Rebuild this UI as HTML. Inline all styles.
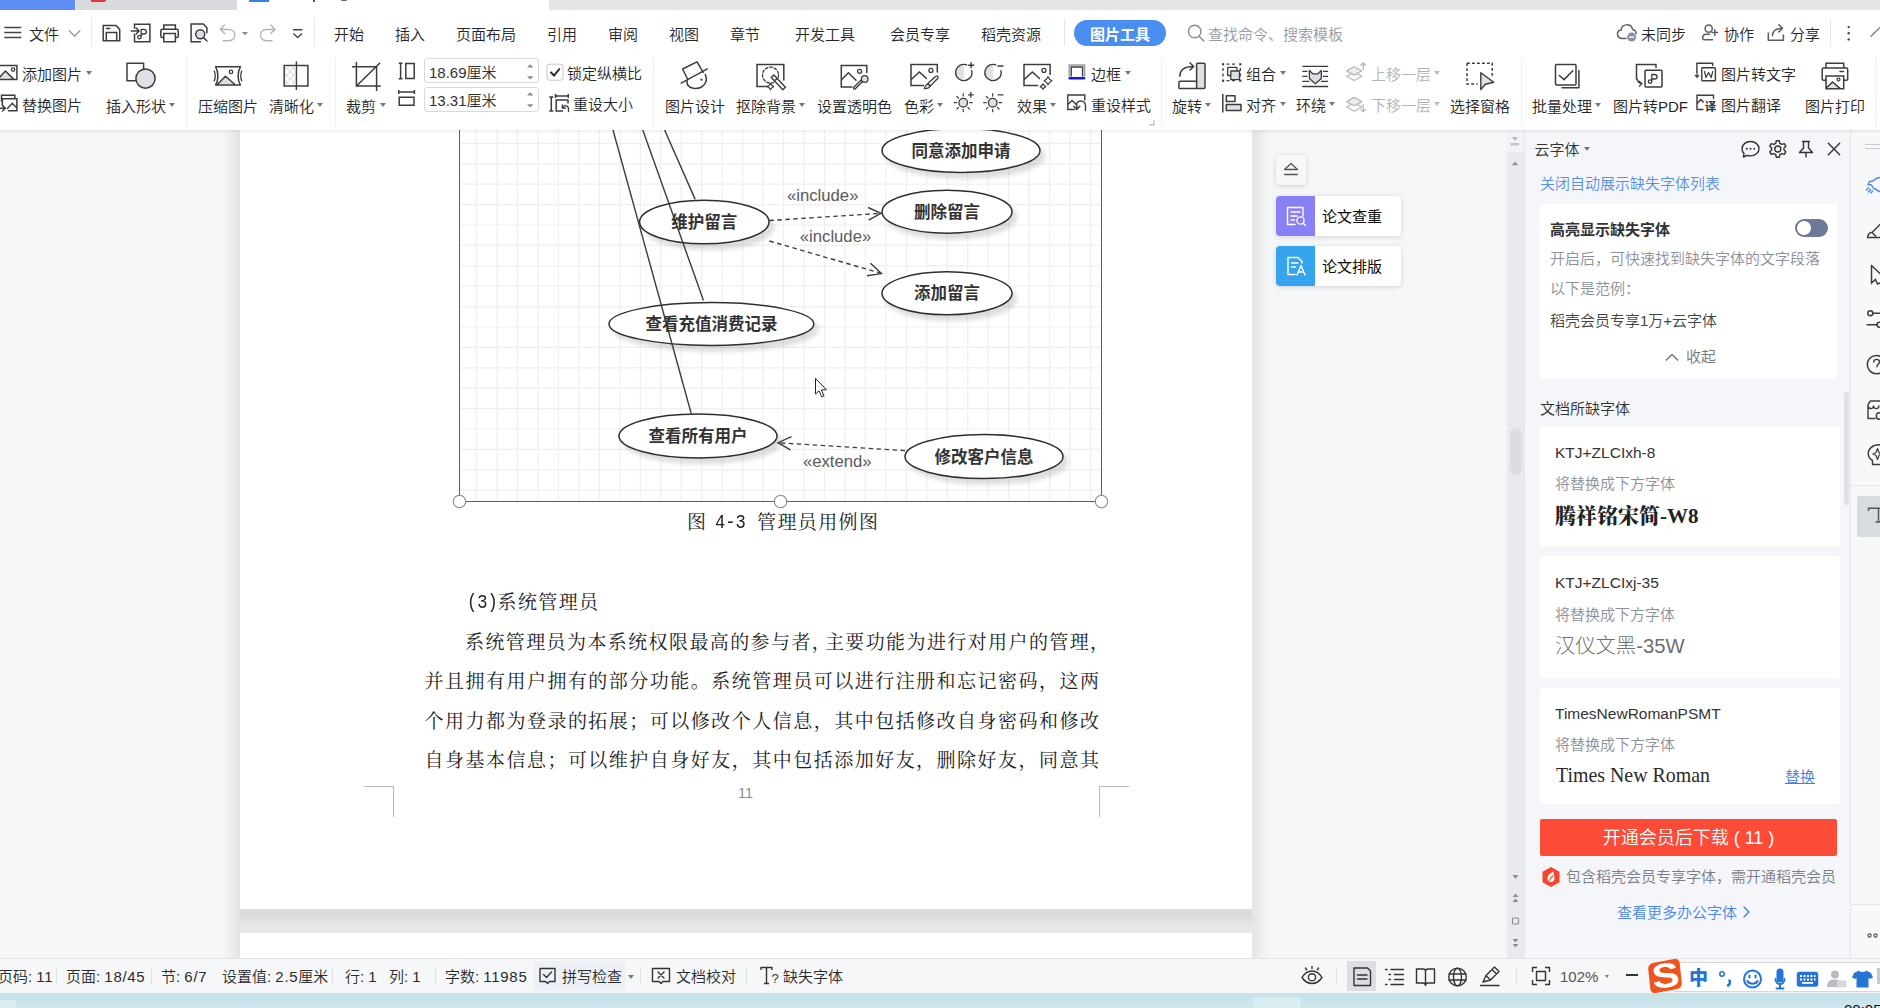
<!DOCTYPE html>
<html lang="zh-CN">
<head>
<meta charset="utf-8">
<title>WPS</title>
<style>
*{box-sizing:border-box;margin:0;padding:0}
html,body{width:1880px;height:1008px;overflow:hidden;background:#fff}
body{position:relative;font-family:"Liberation Sans","Noto Sans CJK SC",sans-serif;color:#222;font-size:15px}
.a{position:absolute}
.t{position:absolute;white-space:nowrap;font-size:15px;line-height:20px;height:20px;color:#262626;margin-top:2px;font-weight:350}
.g{color:#b4b4b4}
svg{position:absolute;overflow:visible}
.s{fill:none;stroke:#3a3a3a;stroke-width:1.5;stroke-linecap:round;stroke-linejoin:round}
.dd{position:absolute;width:0;height:0;border-left:3px solid transparent;border-right:3px solid transparent;border-top:4px solid #777}
.sep{position:absolute;width:1px;background:#e6e6e6}
.st{font-size:15px;color:#2b2b2b}
.n{letter-spacing:.7px}
/* document */
.mn{font-family:"Liberation Mono",monospace;font-size:20.5px !important;letter-spacing:0 !important;transform:scaleX(.835);transform-origin:0 50%}
.j{text-align:justify;text-align-last:justify;letter-spacing:0 !important;white-space:normal !important}
.doc{font-family:"Liberation Serif","Noto Serif CJK SC",serif;color:#1a1a1a}
.dl{position:absolute;white-space:nowrap;font-size:19px;line-height:24px;height:24px;letter-spacing:1.4px;color:#222}
</style>
</head>
<body>
<!-- ===== title strip ===== -->
<div class="a" id="titlestrip" style="left:0;top:0;width:1880px;height:10px;background:#e4e5e7"></div>
<div class="a" style="left:0;top:0;width:75px;height:10px;background:#5d8df5"></div>
<div class="a" style="left:76px;top:0;width:161px;height:10px;background:#d9dadd"></div>
<div class="a" style="left:237px;top:0;width:312px;height:10px;background:#fff"></div>
<div class="a" style="left:91px;top:0;width:15px;height:2px;background:#e8323c;border-radius:0 0 6px 2px"></div>
<div class="a" style="left:249px;top:0;width:20px;height:2px;background:#3c7df0"></div>
<div class="a" style="left:313px;top:0;width:2px;height:2px;background:#555"></div>
<div class="a" style="left:341px;top:0;width:6px;height:1px;background:#666;border-radius:0 0 3px 3px"></div>

<!-- ===== menu row ===== -->
<div class="a" id="menurow" style="left:0;top:10px;width:1880px;height:45px;background:#fff"></div>

<!-- ===== ribbon ===== -->
<div class="a" id="ribbon" style="left:0;top:55px;width:1880px;height:75px;background:#fff"></div>


<!-- menu texts -->
<div class="t" style="left:29px;top:23px">文件</div>
<div class="sep" style="left:91px;top:17px;height:30px;background:#e9e9e9"></div>
<div class="sep" style="left:314px;top:17px;height:30px;background:#e9e9e9"></div>
<div class="t" style="left:334px;top:23px">开始</div>
<div class="t" style="left:395px;top:23px">插入</div>
<div class="t" style="left:456px;top:23px">页面布局</div>
<div class="t" style="left:547px;top:23px">引用</div>
<div class="t" style="left:608px;top:23px">审阅</div>
<div class="t" style="left:669px;top:23px">视图</div>
<div class="t" style="left:730px;top:23px">章节</div>
<div class="t" style="left:795px;top:23px">开发工具</div>
<div class="t" style="left:890px;top:23px">会员专享</div>
<div class="t" style="left:981px;top:23px">稻壳资源</div>
<div class="sep" style="left:1064px;top:19px;height:27px"></div>
<div class="a" style="left:1074px;top:20px;width:92px;height:26px;border-radius:13px;background:#4a8ef2"></div>
<div class="t" style="left:1090px;top:23px;color:#fff;font-weight:700">图片工具</div>
<div class="t" style="left:1208px;top:23px;color:#989ba3">查找命令、搜索模板</div>
<div class="t" style="left:1641px;top:23px">未同步</div>
<div class="t" style="left:1724px;top:23px">协作</div>
<div class="t" style="left:1790px;top:23px">分享</div>
<div class="sep" style="left:1830px;top:19px;height:27px"></div>


<!-- menu icons -->
<svg style="left:0;top:10px" width="330" height="45" viewBox="0 10 330 45">
<g class="s" style="stroke:#444;stroke-width:1.4;stroke-linecap:butt"><path d="M4.300 27.500 H21.300 M4.300 32.500 H21.300 M4.300 37.500 H21.300"/></g>
<path class="s" style="stroke:#9a9a9a;stroke-width:1.300" d="M69.300 30.800 L74.600 36.200 L79.900 30.800"/>
<g class="s" style="stroke:#3c3c3c;stroke-width:1.500">
<path d="M103.200 25.400 H116.000 L119.700 29.400 V40.700 H103.200 Z M106.300 40.700 V32.600 H116.700 V40.700 M106.500 28.500 H109.800" stroke-linejoin="miter"/>
<path d="M134.500 28.200 V24.200 H149.900 V41.800 H134.500 V34.200 M131.300 31.000 H138.700 M136.200 28.000 L139.000 31.000 L136.200 34.000" stroke-linejoin="miter"/>
<path d="M141.200 37.000 C141.200 39.300 137.700 39.300 137.700 37.000 C137.700 34.900 141.200 34.900 141.200 37.000 V29.300 H143.800 C147.300 29.300 147.300 34.000 143.800 34.000 H141.200" stroke-width="1.300"/>
<path d="M163.800 29.200 V25.100 H175.400 V29.200 M163.800 37.400 H162.300 C161.300 37.400 160.800 36.800 160.800 35.900 V31.000 C160.800 30.000 161.400 29.300 162.400 29.300 H176.700 C177.700 29.300 178.300 30.000 178.300 31.000 V35.900 C178.300 36.800 177.800 37.400 176.800 37.400 H175.400 M163.800 33.600 H175.400 V41.800 H163.800 Z" stroke-linejoin="miter"/>
<path d="M200.500 41.800 H191.100 V24.000 H203.300 L206.900 27.700 V32.700" stroke-linejoin="miter"/>
<circle cx="200.200" cy="34.200" r="4.500" fill="#dcdde4"/><path d="M203.500 37.500 L207.000 41.000"/>
</g>
<g class="s" style="stroke:#b3b3b3;stroke-width:1.400">
<path d="M224.400 25.000 L220.300 29.500 L224.700 33.500 M220.600 29.500 H228.800 C236.800 29.500 236.800 40.700 228.800 40.700 H223.300"/>
<path d="M270.900 25.000 L275.000 29.500 L270.600 33.500 M274.700 29.500 H266.500 C258.500 29.500 258.500 40.700 266.500 40.700 H272.000"/>
</g>
<path d="M241.800 32.000 H248.200 L245.000 35.300 Z" fill="#8c8c9c"/>
<path class="s" style="stroke:#444;stroke-width:1.400;stroke-linecap:butt" d="M293.000 29.800 H302.400 M293.300 33.500 L297.700 37.600 L302.100 33.500"/>
</svg>

<svg style="left:1180px;top:10px" width="700" height="45" viewBox="1180 10 700 45">
<g class="s" style="stroke:#8d8d8d;stroke-width:1.400"><circle cx="1194.700" cy="31.500" r="6.200"/><path d="M1199.200 36.200 L1203.800 41.000"/></g>
<g class="s" style="stroke:#5b5f6b;stroke-width:1.500">
<path d="M1626.000 38.500 H1622.500 C1616.200 38.500 1616.000 30.500 1621.300 30.000 C1621.500 23.500 1631.500 23.000 1632.500 29.500 C1635.000 29.800 1636.300 31.500 1636.000 33.800"/>
<circle cx="1708.700" cy="28.600" r="3.600"/>
<path d="M1712.500 39.800 H1704.500 C1701.800 39.800 1701.800 34.800 1705.800 34.300 H1709.500 M1714.800 29.800 V35.400 M1712.000 32.600 H1717.600"/>
<path d="M1768.300 33.000 V40.200 H1783.400 V35.000 M1772.500 35.800 C1772.500 31.000 1776.000 28.300 1782.300 28.300 M1778.800 24.800 L1782.600 28.300 L1778.800 31.900"/>
</g>
<circle cx="1631.600" cy="37.100" r="4.500" fill="#8a8fa5"/><rect x="1629.100" y="36.400" width="5.000" height="1.400" fill="#fff"/>
<g fill="#444"><circle cx="1848.700" cy="27.100" r="1.200"/><circle cx="1848.700" cy="33.300" r="1.200"/><circle cx="1848.700" cy="39.400" r="1.200"/></g>
<path class="s" style="stroke:#777;stroke-width:1.300" d="M1871.000 36.300 L1880.000 27.400"/>
</svg>

<!-- ribbon icons -->
<svg id="ribicons" style="left:0;top:55px" width="1880" height="75" viewBox="0 55 1880 75">
<g id="rg1" class="s" style="stroke:#3c3c3c;stroke-width:1.500">
<!-- add picture -->
<path d="M-2.000 79.300 L5.400 71.000 L13.800 79.300 Z" fill="#dfe0e5" stroke="none"/>
<path d="M-2.000 65.400 H16.900 V79.600 H-2.000 M-1.500 78.500 L5.400 71.000 L13.900 79.400" stroke-linejoin="miter"/>
<circle cx="13.100" cy="69.600" r="1.700" stroke-width="1.300"/>
<!-- replace picture -->
<path d="M1.500 101.000 V95.300 H14.800 V98.300 M2.300 105.000 V98.700 H16.900 V110.800 H8.500 M-1.000 108.300 H5.000 M2.600 105.600 L5.300 108.300 L2.600 111.000 M7.500 108.500 L12.300 103.300 L16.900 108.000" stroke-linejoin="miter"/>
<!-- shapes -->
<path d="M137.000 80.800 H127.000 V63.200 H143.600 V69.500" stroke-linejoin="miter"/>
<circle cx="145.500" cy="78.600" r="9.600" fill="#dfe0e5"/>
<!-- compress -->
<path d="M217.000 84.800 L225.500 76.300 L235.500 84.800 Z" fill="#dfe0e5" stroke="none"/>
<path d="M215.600 66.800 H240.400 C237.300 72.000 237.300 80.000 240.400 85.000 H215.600 C218.700 80.000 218.700 72.000 215.600 66.800 Z M217.300 84.500 L225.500 76.300 L235.200 84.700"/>
<circle cx="231.000" cy="71.900" r="1.700" stroke-width="1.300"/>
<path d="M214.200 71.000 C215.500 74.000 215.500 78.000 214.200 81.000 M241.800 71.000 C240.500 74.000 240.500 78.000 241.800 81.000" stroke-width="1.300"/>
<!-- sharpen -->
<path d="M296.400 65.400 H284.200 V86.000 H296.400 M296.400 65.400 H307.900 V86.000 H296.400 M296.400 62.000 V89.600" stroke-linejoin="miter"/>
<!-- crop -->
<path d="M356.400 62.000 V86.000 H380.800 M352.000 66.800 H376.600 V90.900 M356.700 85.700 L380.200 62.700" stroke-linecap="butt" stroke-linejoin="miter"/>
<!-- height/width -->
<path d="M398.700 63.200 H402.500 M400.600 63.200 V78.800 M398.700 78.800 H402.500 M405.800 63.400 H414.200 V78.600 H405.800 Z M398.800 90.000 V94.000 M398.800 92.000 H414.400 M414.400 90.000 V94.000 M399.200 97.300 H414.000 V105.200 H399.200 Z" stroke-linecap="butt" stroke-linejoin="miter"/>
<!-- reset size -->
<path d="M549.300 97.000 H553.300 M551.300 97.000 V111.000 M549.300 111.000 H553.300 M555.500 94.000 V98.000 M555.500 96.000 H568.300 M568.300 94.000 V98.000 M563.000 111.000 H556.200 V100.000 H568.000 V103.500" stroke-linecap="butt" stroke-linejoin="miter"/>
<path d="M562.700 107.500 C564.500 104.500 568.500 105.500 568.500 109.000 V111.500 M562.300 105.000 V108.000 H565.300" stroke-width="1.300"/>
</g>
<g fill="#e3e4e8"><rect x="285" y="66.200" width="3.600" height="3.600"/><rect x="288.600" y="69.800" width="3.600" height="3.600"/><rect x="292.200" y="66.200" width="3.400" height="3.600"/><rect x="285.000" y="73.400" width="3.600" height="3.600"/><rect x="292.200" y="73.400" width="3.400" height="3.600"/><rect x="288.600" y="77.000" width="3.600" height="3.600"/><rect x="285.000" y="80.600" width="3.600" height="3.600"/><rect x="292.200" y="80.600" width="3.400" height="3.600"/></g>
<!-- spinners -->
<g fill="#8a8a8a"><path d="M527.000 67.600 L530.200 64.300 L533.400 67.600 Z M527.000 76.200 L530.200 79.500 L533.400 76.200 Z M527.000 95.600 L530.200 92.300 L533.400 95.600 Z M527.000 104.200 L530.200 107.500 L533.400 104.200 Z"/></g>
<!-- checkbox -->
<rect x="547.000" y="64.200" width="16.000" height="16.000" rx="2.500" fill="#fff" stroke="#c9c9c9" stroke-width="1.000"/>
<path d="M550.500 71.800 L554.000 75.500 L559.800 68.500" fill="none" stroke="#222" stroke-width="1.900" stroke-linecap="butt"/>
<g id="rg2" class="s" style="stroke:#3c3c3c;stroke-width:1.500">
<!-- design hat -->
<path d="M682.600 69.000 L697.000 61.900 L703.200 72.300 M682.600 69.000 L687.800 79.500 M681.200 83.100 L707.300 68.800 M687.000 80.500 C686.000 90.000 699.000 90.000 703.500 85.500 C706.500 82.500 707.000 78.500 705.300 74.500"/>
<circle cx="701.400" cy="79.700" r="1.100" fill="#3c3c3c" stroke="none"/>
<!-- remove bg -->
<path d="M768.000 86.400 H757.000 V64.600 H783.800 V80.000" stroke-linejoin="miter"/>
<circle cx="770.500" cy="75.100" r="8.000" stroke-dasharray="2.600 2.000" stroke-width="1.300"/>
<path d="M771.300 77.600 L773.900 75.100 L785.400 87.300 L782.800 89.800 Z M774.400 80.900 L777.000 78.400" fill="#fff" stroke-linejoin="miter" stroke-width="1.400"/>
<path d="M770.5 83.39999999999999 Q771.396 85.704 773.7 86.6 Q771.396 87.496 770.5 89.8 Q769.604 87.496 767.3 86.6 Q769.604 85.704 770.5 83.39999999999999 Z" fill="#fff" stroke-width="1.200"/>
<!-- transparent color -->
<path d="M852.000 87.000 H841.300 V65.500 H866.800 V72.500 M841.500 79.800 L848.400 72.800 L856.000 80.300" stroke-linejoin="miter"/>
<circle cx="859.600" cy="71.300" r="2.000" stroke-width="1.300"/>
<path d="M862.300 81.800 L855.300 88.800 C854.300 89.800 852.800 88.300 853.800 87.300 L860.800 80.300" stroke-width="1.300"/>
<circle cx="864.700" cy="79.000" r="3.300" fill="#dfe0e5" stroke-width="1.300"/>
<!-- color -->
<path d="M923.500 85.400 H911.000 V64.600 H937.300 V72.000 M911.200 79.500 L919.400 71.900 L926.500 78.500" stroke-linejoin="miter"/>
<circle cx="930.900" cy="70.400" r="2.000" stroke-width="1.300"/>
<path d="M935.800 76.300 C937.300 75.300 938.800 76.800 937.800 78.300 L930.300 86.000 L927.800 83.600 Z" stroke-width="1.300"/>
<path d="M927.800 83.800 L930.200 86.100 C929.000 88.500 926.500 88.800 924.200 88.600 C925.200 87.000 925.300 84.800 927.800 83.800 Z" fill="#dfe0e5" stroke-width="1.200"/>
<!-- contrast -->
<path d="M963.900 64.500 C953.200 64.500 953.200 80.500 963.900 80.500 Z" fill="#dfe0e5" stroke="none"/>
<path d="M966.500 64.700 C955.000 62.000 951.500 77.500 961.500 80.300 C968.000 82.000 973.000 76.500 971.800 70.800 M968.600 65.300 H973.600 M971.100 62.800 V67.800" stroke-width="1.400"/>
<path d="M993.100 64.500 C982.400 64.500 982.400 80.500 993.100 80.500 Z" fill="#dfe0e5" stroke="none"/>
<path d="M995.700 64.700 C984.200 62.000 980.700 77.500 990.700 80.300 C997.200 82.000 1002.200 76.500 1001.000 70.800 M998.000 66.000 H1003.000" stroke-width="1.400"/>
<!-- brightness -->
<circle cx="963.200" cy="102.700" r="4.300" fill="#dfe0e5" stroke-width="1.300"/>
<path d="M969.8 102.7 L972.2 102.7 M967.9 107.4 L969.6 109.1 M963.2 109.3 L963.2 111.7 M958.5 107.4 L956.8 109.1 M956.6 102.7 L954.2 102.7 M958.5 98.0 L956.8 96.3 M963.2 96.1 L963.2 93.7" stroke-width="1.200"/>
<path d="M968.400 94.800 H973.200 M970.800 92.400 V97.200" stroke-width="1.300"/>
<circle cx="992.700" cy="102.700" r="4.300" fill="#dfe0e5" stroke-width="1.300"/>
<path d="M999.3 102.7 L1001.7 102.7 M997.4 107.4 L999.1 109.1 M992.7 109.3 L992.7 111.7 M988.0 107.4 L986.3 109.1 M986.1 102.7 L983.7 102.7 M988.0 98.0 L986.3 96.3 M992.7 96.1 L992.7 93.7" stroke-width="1.200"/>
<path d="M998.000 94.800 H1003.000" stroke-width="1.300"/>
<!-- effects -->
<path d="M1037.500 85.400 H1024.000 V64.600 H1050.100 V74.500 M1024.200 79.500 L1032.400 71.900 L1039.500 78.500" stroke-linejoin="miter"/>
<circle cx="1043.900" cy="70.400" r="2.000" stroke-width="1.300"/>
<path d="M1048 76.7 Q1049.12 79.58 1052.0 80.7 Q1049.12 81.82000000000001 1048 84.7 Q1046.88 81.82000000000001 1044.0 80.7 Q1046.88 79.58 1048 76.7 Z" fill="#fff" stroke-width="1.200"/>
<path d="M1043 83.8 Q1043.784 85.81599999999999 1045.8 86.6 Q1043.784 87.384 1043 89.39999999999999 Q1042.216 87.384 1040.2 86.6 Q1042.216 85.81599999999999 1043 83.8 Z" fill="#fff" stroke-width="1.200"/>
<!-- border -->
<path d="M1069.200 76.000 V65.000 H1084.600 V76.000" stroke="#9a9ca6" stroke-width="1.400" stroke-linejoin="miter"/>
<path d="M1071.200 76.000 V67.000 H1082.600 V76.000" stroke-linejoin="miter" stroke-width="1.400"/>
<!-- reset style -->
<path d="M1074.500 109.500 H1067.800 V95.000 H1084.800 V100.000 M1068.000 104.500 L1072.000 100.500 L1076.000 104.300" stroke-linejoin="miter" stroke-width="1.400"/>
<path d="M1076.500 103.500 C1079.000 99.500 1085.500 100.500 1085.500 106.000 V110.500 M1073.800 106.200 L1076.800 109.500 L1079.800 106.200 M1076.800 103.500 V109.200" stroke-width="1.400"/>
</g>
<rect x="1068.500" y="77.100" width="16.800" height="2.400" rx="1.200" fill="#1717d8"/>
<path d="M1149.000 124.800 H1154.000 V120.200" fill="none" stroke="#c6c6c6" stroke-width="1.500"/>
<g id="rg3" class="s" style="stroke:#3c3c3c;stroke-width:1.500">
<!-- rotate -->
<rect x="1196.600" y="63.300" width="8.400" height="25.200" rx="1.000" fill="#dfe0e5"/>
<path d="M1196.600 81.200 H1180.000 C1179.300 81.200 1178.900 81.600 1178.900 82.300 V87.400 C1178.900 88.100 1179.300 88.500 1180.000 88.500 H1196.600"/>
<path d="M1179.900 76.300 C1179.900 70.500 1184.000 66.500 1193.300 66.500 M1190.000 63.000 L1193.700 66.500 L1190.000 70.000"/>
<!-- group -->
<rect x="1227.700" y="67.300" width="9.200" height="8.200" stroke-width="1.300"/>
<rect x="1230.800" y="71.000" width="8.700" height="8.700" fill="#dfe0e5" stroke-width="1.300"/>
<path d="M1226.500 64.200 H1236.500 M1226.500 80.600 H1236.500 M1223.000 68.000 V77.000 M1240.300 68.000 V77.000" stroke-dasharray="3.000 2.500" stroke-width="1.300" stroke-linecap="butt"/>
<g fill="#3c3c3c" stroke="none"><rect x="1222.000" y="63.200" width="2.200" height="2.200"/><rect x="1239.200" y="63.200" width="2.200" height="2.200"/><rect x="1222.000" y="79.600" width="2.200" height="2.200"/><rect x="1239.200" y="79.600" width="2.200" height="2.200"/></g>
<!-- align -->
<path d="M1222.800 94.000 V112.600" stroke-linecap="butt"/>
<rect x="1226.300" y="95.800" width="8.700" height="5.600"/>
<rect x="1226.300" y="104.600" width="14.700" height="6.000" fill="#dfe0e5"/>
<!-- wrap -->
<path d="M1302.300 66.400 H1328.100 M1302.300 86.500 H1328.100 M1302.300 71.300 H1307.500 M1302.300 76.400 H1307.500 M1302.300 81.300 H1309.500 M1323.000 71.300 H1328.100 M1323.000 76.400 H1328.100 M1321.000 81.300 H1328.100" stroke-linecap="butt" stroke-width="1.300"/>
<path d="M1309.400 70.400 L1312.700 73.800 H1318.000 L1321.300 70.400 V78.400 L1315.400 83.800 L1309.400 78.400 Z" fill="#dfe0e5" stroke-width="1.300"/>
<!-- selection pane -->
<path d="M1467.000 63.200 H1492.200 V77.000 M1467.000 63.200 V84.000 H1477.500" stroke-dasharray="2.800 2.200" stroke-linecap="butt" stroke-linejoin="miter"/>
<path d="M1480.800 72.800 L1493.800 82.200 L1485.300 84.300 L1480.800 89.600 Z" fill="#dfe0e5" stroke-width="1.400"/>
<!-- batch -->
<rect x="1555.500" y="64.500" width="20.500" height="20.500" rx="1.000"/>
<path d="M1578.900 70.500 V87.800 H1562.000 M1559.300 75.500 L1564.000 79.600 L1572.800 70.800"/>
<!-- pic to pdf -->
<path d="M1636.500 79.000 V64.500 H1656.000 V67.500" stroke-linejoin="miter"/>
<rect x="1645.000" y="70.300" width="17.000" height="16.800" rx="1.000"/>
<path d="M1651.800 81.500 C1651.800 83.800 1648.300 83.800 1648.300 81.500 C1648.300 79.400 1651.800 79.400 1651.800 81.500 V74.500 H1654.500 C1658.000 74.500 1658.000 79.000 1654.500 79.000 H1651.800" stroke-width="1.300"/>
<path d="M1636.800 78.500 C1637.500 81.500 1639.000 83.300 1641.800 83.700 M1639.300 81.200 L1642.000 83.800 L1639.300 86.400" stroke-width="1.300"/>
<!-- pic to text -->
<path d="M1696.900 72.000 V63.200 H1712.700 V65.500" stroke-linejoin="miter" stroke-width="1.400"/>
<rect x="1701.800" y="67.800" width="13.600" height="13.000" rx="0.800" stroke-width="1.400"/>
<path d="M1704.500 71.500 L1706.000 77.500 L1708.600 72.500 L1711.200 77.500 L1712.700 71.500" stroke-width="1.200"/>
<path d="M1697.000 72.000 V77.000 M1695.300 75.300 L1697.000 77.300 L1698.700 75.300" stroke-width="1.200"/>
<!-- translate -->
<path d="M1703.000 109.500 H1697.000 V95.200 H1713.500 V98.500 M1697.200 103.500 L1700.800 99.500 L1703.300 102.000" stroke-linejoin="miter" stroke-width="1.400"/>
<!-- print -->
<path d="M1826.000 67.900 V63.200 H1843.700 V67.900 M1826.000 80.200 H1823.500 C1822.600 80.200 1822.200 79.700 1822.200 78.900 V69.300 C1822.200 68.400 1822.700 68.000 1823.500 68.000 H1846.300 C1847.200 68.000 1847.700 68.400 1847.700 69.300 V78.900 C1847.700 79.700 1847.300 80.200 1846.400 80.200 H1843.700 M1840.000 71.600 H1843.500" stroke-linejoin="miter"/>
<path d="M1826.300 88.300 L1832.500 82.000 L1840.000 88.500 Z" fill="#dfe0e5" stroke="none"/>
<path d="M1826.000 76.000 H1843.700 V88.800 H1826.000 Z M1826.300 88.000 L1832.500 82.000 L1840.300 88.600" stroke-linejoin="miter"/>
<circle cx="1838.500" cy="79.600" r="1.500" stroke-width="1.200"/>
</g>
<text x="1704.800" y="110.800" font-size="11.500" font-weight="700" fill="#333" font-family="Liberation Sans, Noto Sans CJK SC, sans-serif">译</text>
<!-- move up/down layer (disabled) -->
<g class="s" style="stroke:#b9b9b9;stroke-width:1.300">
<path d="M1346.6000000000001 76.3 L1354.2 72.1 L1361.8 76.3 L1354.2 80.5 Z"/>
<path d="M1346.6000000000001 70.9 L1354.2 66.7 L1361.8 70.9 L1354.2 75.10000000000001 Z" fill="#ededed"/>
<path d="M1363.200 69.500 V62.800 M1360.800 65.200 L1363.200 62.700 L1365.600 65.200"/>
<path d="M1346.6000000000001 107.0 L1354.2 102.8 L1361.8 107.0 L1354.2 111.2 Z"/>
<path d="M1346.6000000000001 101.6 L1354.2 97.39999999999999 L1361.8 101.6 L1354.2 105.8 Z" fill="#ededed"/>
<path d="M1363.200 104.500 V111.800 M1360.800 109.400 L1363.200 111.900 L1365.600 109.400"/>
</g>
</svg>
<!-- ribbon texts -->
<div class="t" style="left:22px;top:63px">添加图片</div><div class="dd" style="left:86px;top:71px"></div>
<div class="t" style="left:22px;top:94px">替换图片</div>
<div class="t" style="left:106px;top:95px">插入形状</div><div class="dd" style="left:169px;top:103px"></div>
<div class="sep" style="left:186px;top:57px;height:70px;background:#f0f0f0"></div>
<div class="t" style="left:198px;top:95px">压缩图片</div>
<div class="t" style="left:269px;top:95px">清晰化</div><div class="dd" style="left:317px;top:103px"></div>
<div class="sep" style="left:335px;top:57px;height:70px;background:#f0f0f0"></div>
<div class="t" style="left:346px;top:95px">裁剪</div><div class="dd" style="left:380px;top:103px"></div>
<div class="a" style="left:424px;top:58px;width:115px;height:25px;border:1px solid #d9d9d9;border-radius:3px"></div>
<div class="a" style="left:424px;top:86.500px;width:115px;height:25px;border:1px solid #d9d9d9;border-radius:3px"></div>
<div class="t" style="left:429px;top:61px;color:#333">18.69厘米</div>
<div class="t" style="left:429px;top:89px;color:#333">13.31厘米</div>
<div class="t" style="left:567px;top:62px">锁定纵横比</div>
<div class="t" style="left:573px;top:93px">重设大小</div>
<div class="sep" style="left:653px;top:57px;height:70px;background:#f0f0f0"></div>
<div class="t" style="left:665px;top:95px">图片设计</div>
<div class="t" style="left:736px;top:95px">抠除背景</div><div class="dd" style="left:799px;top:103px"></div>
<div class="t" style="left:817px;top:95px">设置透明色</div>
<div class="t" style="left:904px;top:95px">色彩</div><div class="dd" style="left:937px;top:103px"></div>
<div class="t" style="left:1017px;top:95px">效果</div><div class="dd" style="left:1050px;top:103px"></div>
<div class="t" style="left:1091px;top:63px">边框</div><div class="dd" style="left:1125px;top:71px"></div>
<div class="t" style="left:1091px;top:94px">重设样式</div>
<div class="sep" style="left:1161px;top:57px;height:70px;background:#f0f0f0"></div>
<div class="t" style="left:1172px;top:95px">旋转</div><div class="dd" style="left:1205px;top:103px"></div>
<div class="t" style="left:1246px;top:63px">组合</div><div class="dd" style="left:1280px;top:71px"></div>
<div class="t" style="left:1246px;top:94px">对齐</div><div class="dd" style="left:1280px;top:102px"></div>
<div class="t" style="left:1296px;top:94px">环绕</div><div class="dd" style="left:1329px;top:102px"></div>
<div class="t g" style="left:1371px;top:63px">上移一层</div><div class="dd" style="left:1434px;top:71px;border-top-color:#bbb"></div>
<div class="t g" style="left:1371px;top:94px">下移一层</div><div class="dd" style="left:1434px;top:102px;border-top-color:#bbb"></div>
<div class="t" style="left:1450px;top:95px">选择窗格</div>
<div class="sep" style="left:1521px;top:57px;height:70px;background:#f0f0f0"></div>
<div class="t" style="left:1532px;top:95px">批量处理</div><div class="dd" style="left:1595px;top:103px"></div>
<div class="t" style="left:1613px;top:95px">图片转PDF</div>
<div class="t" style="left:1721px;top:63px">图片转文字</div>
<div class="t" style="left:1721px;top:94px">图片翻译</div>
<div class="t" style="left:1805px;top:95px">图片打印</div>
<div class="sep" style="left:1876px;top:57px;height:70px;background:#f0f0f0"></div>

<!-- ===== document area ===== -->
<div class="a" id="docarea" style="left:0;top:130px;width:1524px;height:830px;background:#f5f6f8;overflow:hidden">
<div class="a" style="left:224px;top:0;width:16px;height:830px;background:linear-gradient(90deg,#f5f6f8,#eceded 45%,#e3e4e7)"></div>
<div class="a" style="left:1252px;top:0;width:16px;height:830px;background:linear-gradient(270deg,#f5f6f8,#ecedef 45%,#e3e4e7)"></div>
<div class="a" style="left:240px;top:0;width:1012px;height:830px;background:linear-gradient(#dbdcde,#dadbdd 30%,#e9e9eb);"></div>
<div class="a" style="left:240px;top:0;width:1012px;height:779px;background:#fff"></div>
<div class="a" style="left:240px;top:779px;width:1012px;height:24px;background:linear-gradient(#dddddf,#d9dadc 25%,#e6e6e8 70%,#e9e9ea)"></div>
<div class="a" style="left:240px;top:803px;width:1012px;height:30px;background:#fff"></div>
<svg id="diagram" style="left:0;top:0" width="1524" height="400" viewBox="0 130 1524 400">
<g stroke="#efefef" stroke-width="1.200"><line x1="476.5" y1="130" x2="476.5" y2="501"/><line x1="497.0" y1="130" x2="497.0" y2="501"/><line x1="517.4" y1="130" x2="517.4" y2="501"/><line x1="537.9" y1="130" x2="537.9" y2="501"/><line x1="558.4" y1="130" x2="558.4" y2="501"/><line x1="578.9" y1="130" x2="578.9" y2="501"/><line x1="599.3" y1="130" x2="599.3" y2="501"/><line x1="619.8" y1="130" x2="619.8" y2="501"/><line x1="640.3" y1="130" x2="640.3" y2="501"/><line x1="660.7" y1="130" x2="660.7" y2="501"/><line x1="681.2" y1="130" x2="681.2" y2="501"/><line x1="701.7" y1="130" x2="701.7" y2="501"/><line x1="722.1" y1="130" x2="722.1" y2="501"/><line x1="742.6" y1="130" x2="742.6" y2="501"/><line x1="763.1" y1="130" x2="763.1" y2="501"/><line x1="783.5" y1="130" x2="783.5" y2="501"/><line x1="804.0" y1="130" x2="804.0" y2="501"/><line x1="824.5" y1="130" x2="824.5" y2="501"/><line x1="845.0" y1="130" x2="845.0" y2="501"/><line x1="865.4" y1="130" x2="865.4" y2="501"/><line x1="885.9" y1="130" x2="885.9" y2="501"/><line x1="906.4" y1="130" x2="906.4" y2="501"/><line x1="926.8" y1="130" x2="926.8" y2="501"/><line x1="947.3" y1="130" x2="947.3" y2="501"/><line x1="967.8" y1="130" x2="967.8" y2="501"/><line x1="988.2" y1="130" x2="988.2" y2="501"/><line x1="1008.7" y1="130" x2="1008.7" y2="501"/><line x1="1029.2" y1="130" x2="1029.2" y2="501"/><line x1="1049.7" y1="130" x2="1049.7" y2="501"/><line x1="1070.1" y1="130" x2="1070.1" y2="501"/><line x1="1090.6" y1="130" x2="1090.6" y2="501"/><line x1="460" y1="143.4" x2="1101" y2="143.4"/><line x1="460" y1="163.8" x2="1101" y2="163.8"/><line x1="460" y1="184.2" x2="1101" y2="184.2"/><line x1="460" y1="204.6" x2="1101" y2="204.6"/><line x1="460" y1="225.0" x2="1101" y2="225.0"/><line x1="460" y1="245.4" x2="1101" y2="245.4"/><line x1="460" y1="265.8" x2="1101" y2="265.8"/><line x1="460" y1="286.2" x2="1101" y2="286.2"/><line x1="460" y1="306.6" x2="1101" y2="306.6"/><line x1="460" y1="327.0" x2="1101" y2="327.0"/><line x1="460" y1="347.4" x2="1101" y2="347.4"/><line x1="460" y1="367.8" x2="1101" y2="367.8"/><line x1="460" y1="388.2" x2="1101" y2="388.2"/><line x1="460" y1="408.6" x2="1101" y2="408.6"/><line x1="460" y1="429.0" x2="1101" y2="429.0"/><line x1="460" y1="449.4" x2="1101" y2="449.4"/><line x1="460" y1="469.8" x2="1101" y2="469.8"/><line x1="460" y1="490.2" x2="1101" y2="490.2"/></g>
<g id="dia">
<defs><filter id="sh" x="-20%" y="-30%" width="140%" height="180%"><feDropShadow dx="4.500" dy="5.500" stdDeviation="2.000" flood-color="#000" flood-opacity=".13"/></filter></defs>
<line x1="459.5" y1="130" x2="459.5" y2="501" stroke="#5e5e5e" stroke-width="1"/>
<line x1="1101.5" y1="130" x2="1101.5" y2="501" stroke="#5e5e5e" stroke-width="1"/>
<line x1="459.5" y1="501.5" x2="1101.5" y2="501.5" stroke="#5e5e5e" stroke-width="1"/>
<g fill="#fff" stroke="#2e2e2e" stroke-width="1.5" filter="url(#sh)">
<ellipse cx="961" cy="150.5" rx="79" ry="22"/>
<ellipse cx="704.3" cy="222" rx="64.7" ry="21.8"/>
<ellipse cx="947" cy="211.7" rx="65" ry="21.5"/>
<ellipse cx="947" cy="293.3" rx="65" ry="21.5"/>
<ellipse cx="711.4" cy="324" rx="102.4" ry="21.4"/>
<ellipse cx="698" cy="436" rx="79" ry="22"/>
<ellipse cx="984" cy="456.6" rx="79" ry="22"/>
</g>
<g stroke="#3c3c3c" stroke-width="1.4" fill="none">
<line x1="613" y1="130" x2="691.2" y2="413.5"/>
<line x1="642.8" y1="130" x2="703.5" y2="300.6"/>
<line x1="664.6" y1="130" x2="695.2" y2="199.4"/>
<line x1="769.4" y1="220.5" x2="880" y2="213.4" stroke-dasharray="4.5 3.5"/>
<polyline points="868,207.5 881,213.3 868.6,220.2"/>
<line x1="769.4" y1="241" x2="880" y2="273" stroke-dasharray="4.5 3.5"/>
<polyline points="870.5,263.3 881.5,273.6 867,275.8"/>
<line x1="905" y1="450.6" x2="779" y2="442.8" stroke-dasharray="4.5 3.5"/>
<polyline points="791.5,436.6 778,442.7 790.5,449.8"/>
</g>
<g font-family="Liberation Sans, Noto Sans CJK SC, sans-serif" font-weight="700" font-size="16.5" fill="#333" text-anchor="middle">
<text x="961" y="156.5">同意添加申请</text>
<text x="704.3" y="228">维护留言</text>
<text x="947" y="217.5">删除留言</text>
<text x="947" y="299.3">添加留言</text>
<text x="711.4" y="330">查看充值消费记录</text>
<text x="698" y="442">查看所有用户</text>
<text x="984" y="462.6">修改客户信息</text>
</g>
<g font-family="Liberation Sans, sans-serif" font-size="16.7" fill="#5a5a5a" text-anchor="middle">
<text x="822.7" y="200.5">«include»</text>
<text x="835.5" y="241.5">«include»</text>
<text x="837.3" y="466.5">«extend»</text>
</g>
<g fill="#fff" stroke="#8a8a8a" stroke-width="1.1">
<circle cx="459.5" cy="501.5" r="6.2"/><circle cx="780.5" cy="501.5" r="6.2"/><circle cx="1101.5" cy="501.5" r="6.2"/>
</g>
<path d="M815.5 378.5 L815.5 394 L819 390.8 L821.7 396.8 L824 395.8 L821.4 390 L826.3 389.6 Z" fill="#fff" stroke="#222" stroke-width="1"/>
</g>
</svg>
<div id="doctext" class="doc">
<div class="dl" style="left:687px;top:381px">图</div>
<div class="dl mn" style="left:715px;top:381px">4-3</div>
<div class="dl" style="left:757px;top:381px">管理员用例图</div>
<div class="dl mn" style="left:466.500px;top:461px">(3)</div>
<div class="dl" style="left:497.500px;top:461px">系统管理员</div>
<div class="dl" style="left:465px;top:500.500px">系统管理员为本系统权限最高的参与者<span style="margin-right:-7.300px">，</span>主要功能为进行对用户的管理，</div>
<div class="dl j" style="left:424.5px;top:540px;width:674.5px">并且拥有用户拥有的部分功能。系统管理员可以进行注册和忘记密码，这两</div>
<div class="dl j" style="left:424.5px;top:580px;width:674.5px">个用力都为登录的拓展；可以修改个人信息，其中包括修改自身密码和修改</div>
<div class="dl j" style="left:424.5px;top:619px;width:674.5px">自身基本信息；可以维护自身好友，其中包括添加好友，删除好友，同意其</div>
<div class="a" style="left:738px;top:653px;font-family:'Liberation Sans',sans-serif;font-size:14.5px;line-height:20px;color:#8c8c8c;letter-spacing:0">11</div>
<div class="a" style="left:364px;top:656px;width:30px;height:31px;border-top:1px solid #b9b9b9;border-right:1px solid #b9b9b9"></div>
<div class="a" style="left:1099px;top:656px;width:30px;height:31px;border-top:1px solid #b9b9b9;border-left:1px solid #b9b9b9"></div>
</div>
</div>

<!-- ===== right panel ===== -->

<!-- floating buttons next to page -->
<div class="a" style="left:1276px;top:155px;width:30px;height:30px;background:#f7f8fa;border-radius:3px;box-shadow:0 1px 4px rgba(0,0,0,.16)"></div>
<svg style="left:1276px;top:155px" width="30" height="30" viewBox="0 0 30 30"><path class="s" style="stroke:#555;stroke-width:1.3" d="M8.5 14.5 L15 8.5 L21.5 14.5 Z M8.5 19.5 H21.5"/></svg>
<div class="a" style="left:1276px;top:196px;width:125px;height:40px;background:#fff;border-radius:4px;box-shadow:0 1px 5px rgba(0,0,0,.14)"></div>
<div class="a" style="left:1276px;top:196px;width:39px;height:40px;background:#8a80f6;border-radius:4px 0 0 4px"></div>
<svg style="left:1276px;top:196px" width="39" height="40" viewBox="0 0 39 40"><g fill="none" stroke="#fff" stroke-width="1.4" stroke-linecap="round" stroke-linejoin="round"><path d="M27 20 V11.5 H11.5 V28.5 H19"/><path d="M15 16 H24 M15 20 H21 M15 24 H18.5"/><circle cx="24.5" cy="24.5" r="3.6"/><path d="M27.2 27.2 L29.5 29.5"/></g></svg>
<div class="t" style="left:1322px;top:205px;color:#0a0a0a;font-weight:400">论文查重</div>
<div class="a" style="left:1276px;top:246px;width:125px;height:40px;background:#fff;border-radius:4px;box-shadow:0 1px 5px rgba(0,0,0,.14)"></div>
<div class="a" style="left:1276px;top:246px;width:39px;height:40px;background:#36a3ee;border-radius:4px 0 0 4px"></div>
<svg style="left:1276px;top:246px" width="39" height="40" viewBox="0 0 39 40"><g fill="none" stroke="#fff" stroke-width="1.4" stroke-linecap="round" stroke-linejoin="round"><path d="M26 17 V15.5 L22 11.5 H12 V28.5 H19"/><path d="M15.5 17 H22 M15.5 21 H19.5"/><path d="M21 29 L25 19.5 L29 29 M22.5 26 H27.5"/></g></svg>
<div class="t" style="left:1322px;top:255px;color:#0a0a0a;font-weight:400">论文排版</div>

<!-- doc vertical scrollbar -->
<div class="a" style="left:1507px;top:130px;width:17.500px;height:22px;background:#f2f3f6"></div>
<div class="a" style="left:1507px;top:152px;width:17.500px;height:806px;background:#e9eaf0"></div>
<div class="a" style="left:1524px;top:130px;width:1px;height:828px;background:#e4e5e9"></div>
<div class="a" style="left:1510px;top:428px;width:12px;height:47px;background:#dcdde3;border-radius:6px"></div>
<svg style="left:1508px;top:130px" width="16" height="830" viewBox="0 0 16 830"><g fill="#8b8e99">
<path d="M3.800 35.300 L7.000 31.600 L10.200 35.300 Z"/>
<path d="M4.5 745 L10.5 745 L7.5 749 Z"/>
<path d="M4.5 767 L7.5 763.5 L10.5 767 Z M4.5 772 L7.5 768.5 L10.5 772 Z"/>
<path d="M4.5 809 L10.5 809 L7.5 812.5 Z M4.5 814 L10.5 814 L7.5 817.5 Z"/>
</g><rect x="4.5" y="788" width="6" height="6" rx="1" fill="none" stroke="#8b8e99" stroke-width="1.2"/>
<g fill="#b4b7c1"><path d="M3.800 7.000 H9.800 L6.800 10.800 Z"/><rect x="2.800" y="13.000" width="2.200" height="2.600"/><rect x="5.700" y="13.000" width="2.200" height="2.600"/><rect x="8.600" y="13.000" width="2.200" height="2.600"/></g></svg>
<div class="a" id="rpanel" style="left:1525px;top:130px;width:325px;height:830px;background:#f5f6f9"></div>
<div class="t" style="left:1534.500px;top:138px;color:#333">云字体</div><div class="dd" style="left:1584px;top:147px"></div>
<svg style="left:1740px;top:139px" width="104" height="20" viewBox="0 0 104 20"><g class="s" style="stroke:#333;stroke-width:1.4">
<path d="M10.500 2.500 C15.200 2.500 19.000 5.700 19.000 9.700 C19.000 13.700 15.200 16.900 10.500 16.900 C9.300 16.900 8.200 16.700 7.200 16.400 L3.400 18.000 L4.000 14.500 C2.700 13.200 2.000 11.500 2.000 9.700 C2.000 5.700 5.800 2.500 10.500 2.500 Z"/>
<path d="M88.300 4.300 L99.700 15.700 M99.700 4.300 L88.300 15.700"/>
<path d="M62.500 2.500 H69.500 M63.500 2.500 V9.000 L59.500 13.500 H72.500 L68.500 9.000 V2.500 M66.000 13.500 V18.000"/>
<circle cx="37.800" cy="10.000" r="3.000"/>
<path d="M36.3 1.8 H39.3 L39.9 4.3 L41.9 5.4 L44.3 4.600 L45.800 7.200 L44.000 9.000 V11.000 L45.800 12.800 L44.300 15.400 L41.900 14.600 L39.900 15.700 L39.300 18.200 H36.300 L35.700 15.700 L33.700 14.600 L31.300 15.400 L29.800 12.800 L31.600 11.000 V9.000 L29.800 7.200 L31.300 4.600 L33.700 5.400 L35.700 4.300 Z"/>
</g><g fill="#333"><circle cx="6.8" cy="9.7" r="1"/><circle cx="10.5" cy="9.7" r="1"/><circle cx="14.200" cy="9.700" r="1.000"/></g></svg>
<div class="t" style="left:1540px;top:172px;color:#5a8fe9">关闭自动展示缺失字体列表</div>
<div class="a" style="left:1540px;top:204px;width:297px;height:175px;background:#fff;border-radius:2px"></div>
<div class="t" style="left:1550px;top:218px;font-weight:700;color:#333">高亮显示缺失字体</div>
<div class="a" style="left:1795px;top:219px;width:33px;height:18px;border-radius:9px;background:#6d7997"></div>
<div class="a" style="left:1797px;top:221px;width:14px;height:14px;border-radius:7px;background:#fff"></div>
<div class="t" style="left:1550px;top:247px;color:#8c909a">开启后，可快速找到缺失字体的文字段落</div>
<div class="t" style="left:1550px;top:277px;color:#8c909a">以下是范例：</div>
<div class="t" style="left:1550px;top:309px;color:#444">稻壳会员专享1万+云字体</div>
<svg style="left:1665px;top:351.500px" width="14" height="10" viewBox="0 0 14 10"><path class="s" style="stroke:#777;stroke-width:1.5" d="M1.5 8 L7 2.5 L12.500 8.000"/></svg>
<div class="t" style="left:1686px;top:345px;color:#777">收起</div>
<div class="t" style="left:1540px;top:397px;color:#333">文档所缺字体</div>

<div class="a" style="left:1540px;top:427px;width:300px;height:119px;background:#fff;border-radius:2px"></div>
<div class="t" style="left:1555px;top:441px;color:#333;font-size:15.5px">KTJ+ZLCIxh-8</div>
<div class="t" style="left:1555px;top:472px;color:#8c909a">将替换成下方字体</div>
<div class="t" style="left:1555px;top:501px;color:#222;font-family:'Liberation Serif','Noto Serif CJK SC',serif;font-weight:900;font-size:21px;line-height:26px;height:26px">腾祥铭宋简-W8</div>

<div class="a" style="left:1540px;top:556px;width:300px;height:122px;background:#fff;border-radius:2px"></div>
<div class="t" style="left:1555px;top:571px;color:#333;font-size:15.5px">KTJ+ZLCIxj-35</div>
<div class="t" style="left:1555px;top:603px;color:#8c909a">将替换成下方字体</div>
<div class="t" style="left:1555px;top:631px;color:#6e6e6e;font-weight:300;font-size:20.3px;line-height:26px;height:26px">汉仪文黑-35W</div>

<div class="a" style="left:1540px;top:688px;width:300px;height:116px;background:#fff;border-radius:2px"></div>
<div class="t" style="left:1555px;top:702px;color:#333;font-size:15.5px">TimesNewRomanPSMT</div>
<div class="t" style="left:1555px;top:733px;color:#8c909a">将替换成下方字体</div>
<div class="t" style="left:1556px;top:761px;color:#2a2a2a;font-family:'Liberation Serif',serif;font-size:19.9px;line-height:24px;height:24px">Times New Roman</div>
<div class="t" style="left:1785px;top:765px;color:#3d7fe0;text-decoration:underline">替换</div>

<div class="a" style="left:1540px;top:819px;width:297px;height:37px;background:#fc4b36;border-radius:2px"></div>
<div class="t" style="left:1540px;top:824px;width:297px;text-align:center;color:#fff;font-size:18px;line-height:24px;height:24px">开通会员后下载 ( 11 )</div>
<svg style="left:1541px;top:866px" width="20" height="22" viewBox="0 0 20 22"><path d="M10 1 L18.500 5.800 V16.200 L10.000 21.000 L1.500 16.200 V5.800 Z" fill="#f4452f"/><path d="M6.5 12.500 C6.500 9.000 9.500 7.000 12.500 5.500 C11.800 7.500 13.500 9.000 13.500 12.000 C13.500 14.500 12.000 16.000 10.000 16.000 C8.000 16.000 6.500 14.500 6.500 12.500 Z" fill="#fff"/><path d="M8.5 15 C9 12.500 10.500 11.000 12.000 9.500" stroke="#f4452f" stroke-width="1.100" fill="none"/></svg>
<div class="t" style="left:1566px;top:865px;color:#7a7f8a">包含稻壳会员专享字体，需开通稻壳会员</div>
<div class="t" style="left:1617px;top:901px;color:#4a86e8">查看更多办公字体</div>
<svg style="left:1741px;top:905px" width="10" height="14" viewBox="0 0 10 14"><path class="s" style="stroke:#3d7fe0;stroke-width:1.4" d="M3 2 L8 7 L3 12"/></svg>
<!-- panel scrollbar -->
<div class="a" style="left:1844px;top:392px;width:5px;height:113px;background:#dfe0e6;border-radius:3px"></div>
<!-- far right sidebar -->
<div class="a" style="left:1850px;top:130px;width:30px;height:830px;background:#f7f8fa;border-left:1px solid #e4e5e8"></div>
<div class="a" style="left:1857px;top:496px;width:23px;height:40.500px;background:#d8dbe0;border-radius:2px 0 0 2px"></div>
<div class="a" style="left:1851px;top:485px;width:29px;height:1px;background:#e4e5e8"></div>
<div class="a" style="left:1851px;top:904px;width:29px;height:1px;background:#e4e5e8"></div>
<div class="a" style="left:1865px;top:144px;width:15px;height:1px;background:#c8cacf"></div>
<div class="a" style="left:1865px;top:148px;width:15px;height:1px;background:#c8cacf"></div>
<svg style="left:1851px;top:130px" width="29" height="830" viewBox="1851 130 29 830">
<g fill="none" stroke="#4a86e8" stroke-width="1.400" stroke-linecap="round" stroke-linejoin="round">
<path d="M1880.000 177.500 C1876.000 177.500 1874.500 179.500 1873.000 181.000 L1869.500 181.500 L1868.000 184.500 L1871.500 185.000 L1873.500 188.500 L1876.500 189.500 L1878.500 191.500 L1880.000 191.000 M1868.500 188.000 L1866.500 190.000 M1870.500 189.500 L1868.500 192.000 M1872.500 191.000 L1871.000 193.000"/>
</g>
<g class="s" style="stroke:#3c3c3c;stroke-width:1.500">
<path d="M1880.000 224.500 L1872.000 232.500 C1869.500 232.000 1868.000 234.500 1867.500 237.500 H1880.000 M1872.000 232.500 L1875.500 236.000"/>
<path d="M1871.500 265.500 V283.000 L1875.500 279.500 L1877.500 284.000 L1880.000 283.000 M1871.500 265.500 L1880.000 273.500" stroke-linejoin="miter"/>
<circle cx="1870.300" cy="313.300" r="2.500"/><path d="M1873.000 313.300 H1880.000 M1867.000 324.800 H1877.000"/><circle cx="1879.500" cy="324.800" r="2.500"/>
<circle cx="1876.500" cy="364.600" r="9.200"/>
<path d="M1873.800 362.000 C1873.800 358.500 1879.500 358.500 1879.500 362.000 C1879.500 364.000 1877.000 364.300 1877.000 366.800" stroke-width="1.400"/>
<path d="M1880.000 401.000 H1870.500 L1868.000 404.500 V418.500 H1875.000 M1868.000 406.000 C1869.000 409.500 1873.000 409.500 1873.500 406.000 C1874.000 409.500 1878.500 409.500 1879.000 406.000" stroke-width="1.400"/>
<circle cx="1879.500" cy="416.000" r="3.200" stroke-width="1.400"/>
<path d="M1880.000 444.800 C1872.500 444.500 1868.000 449.000 1868.300 454.000 C1868.500 457.500 1870.500 459.500 1872.500 460.500 V464.500 H1880.000" stroke-width="1.500"/>
<path d="M1877.500 448.500 L1879.000 452.500 L1880.500 454.000 L1879.000 455.500 L1877.500 459.500 L1876.000 455.500 L1873.000 454.000 L1876.000 452.500 Z" stroke-width="1.200"/>
</g>
<path d="M1868.500 511.000 V508.200 H1880.000 M1878.500 508.200 V522.000 M1875.500 522.000 H1880.000" fill="none" stroke="#555" stroke-width="1.400"/>
<g fill="none" stroke="#555" stroke-width="1.200"><circle cx="1869.500" cy="935.500" r="1.600"/><circle cx="1875.500" cy="935.500" r="1.600"/></g>
</svg>


<div class="a" style="left:0;top:130px;width:1880px;height:4px;background:linear-gradient(rgba(0,0,0,.065),rgba(0,0,0,0))"></div>
<!-- ===== status bar ===== -->
<div class="a" id="status" style="left:0;top:958px;width:1880px;height:35px;background:#f6f7f9;border-top:1px solid #e2e3e6"></div>
<div class="t st" style="left:-2px;top:965px">页码: <span class="n">11</span></div>
<div class="sep" style="left:56px;top:968px;height:16px;background:#dfe0e3"></div>
<div class="t st" style="left:66px;top:965px">页面: <span class="n">18/45</span></div>
<div class="sep" style="left:151px;top:968px;height:16px;background:#dfe0e3"></div>
<div class="t st" style="left:161px;top:965px">节: <span class="n">6/7</span></div>
<div class="t st" style="left:222px;top:965px">设置值: <span class="n">2.5</span>厘米</div>
<div class="sep" style="left:332px;top:968px;height:16px;background:#dfe0e3"></div>
<div class="t st" style="left:345px;top:965px">行: <span class="n">1</span></div>
<div class="t st" style="left:389px;top:965px">列: <span class="n">1</span></div>
<div class="sep" style="left:435px;top:968px;height:16px;background:#dfe0e3"></div>
<div class="t st" style="left:445px;top:965px">字数: <span class="n">11985</span></div>
<div class="a" style="left:534px;top:961px;width:91px;height:30px;background:#edf0f7"></div>
<svg style="left:538px;top:966px" width="20" height="20" viewBox="0 0 20 20"><path class="s" style="stroke:#333;stroke-width:1.4" d="M2 2.5 H17 V15.500 H11.500 L9.500 17.500 L7.500 15.500 H2.000 Z M5.500 8.500 L8.500 11.500 L13.500 6.000"/></svg>
<div class="t st" style="left:562px;top:965px">拼写检查</div><div class="dd" style="left:628px;top:975px"></div>
<div class="sep" style="left:640px;top:968px;height:16px;background:#dfe0e3"></div>
<svg style="left:651px;top:966px" width="20" height="20" viewBox="0 0 20 20"><path class="s" style="stroke:#333;stroke-width:1.4" d="M1.5 2.5 H18.500 V15.500 H12.000 L10.000 17.500 L8.000 15.500 H1.500 Z M7.000 6.000 L13.000 12.000 M13.000 6.000 L7.000 12.000"/></svg>
<div class="t st" style="left:676px;top:965px">文档校对</div>
<div class="sep" style="left:746px;top:968px;height:16px;background:#dfe0e3"></div>
<svg style="left:760px;top:965px" width="22" height="22" viewBox="0 0 22 22"><path class="s" style="stroke:#333;stroke-width:1.4;stroke-linecap:butt" d="M1 5 V2.500 H12.000 V5.000 M6.500 2.500 V18.500 M4.000 18.500 H9.000"/><text x="11.5" y="18" font-size="13" fill="#333" font-family="Liberation Sans, sans-serif">?</text></svg>
<div class="t st" style="left:783px;top:965px">缺失字体</div>

<!-- right side of status -->
<svg style="left:1300px;top:964px" width="24" height="24" viewBox="0 0 24 24"><g class="s" style="stroke:#333;stroke-width:1.4"><path d="M2 13.500 C5.000 8.500 8.500 7.000 12.000 7.000 C15.500 7.000 19.000 8.500 22.000 13.500 C19.000 18.000 15.500 19.500 12.000 19.500 C8.500 19.500 5.000 18.000 2.000 13.500 Z"/><circle cx="12" cy="13.300" r="3.600"/><path d="M12 2.500 V4.500 M5.500 4.000 L6.700 5.800 M18.500 4.000 L17.300 5.800"/></g></svg>
<div class="sep" style="left:1336px;top:968px;height:16px;background:#dfe0e3"></div>
<div class="a" style="left:1347px;top:961px;width:29px;height:30px;background:#dcdee3"></div>
<svg style="left:1351px;top:966px" width="22" height="22" viewBox="0 0 22 22"><path class="s" style="stroke:#333;stroke-width:1.4" d="M3 2 H16.500 L19.500 5.000 V19.500 H3.000 Z M6.500 9.000 H16.000 M6.500 13.000 H16.000"/></svg>
<svg style="left:1384px;top:966px" width="22" height="22" viewBox="0 0 22 22"><path class="s" style="stroke:#333;stroke-width:1.4" d="M1.5 3.500 H3.000 M7.000 3.500 H19.500 M5.000 8.500 H6.500 M10.500 8.500 H19.500 M5.000 13.500 H6.500 M10.500 13.500 H19.500 M1.500 18.500 H3.000 M7.000 18.500 H19.500"/></svg>
<svg style="left:1415px;top:966px" width="22" height="22" viewBox="0 0 22 22"><path class="s" style="stroke:#333;stroke-width:1.4" d="M1.5 3 H8.000 C9.500 3.000 10.500 4.000 10.500 5.000 C10.500 4.000 11.500 3.000 13.000 3.000 H19.500 V17.000 H13.000 C11.800 17.000 10.500 17.500 10.500 19.500 C10.500 17.500 9.200 17.000 8.000 17.000 H1.500 Z M10.500 5.000 V18.000"/></svg>
<svg style="left:1447px;top:966px" width="22" height="22" viewBox="0 0 22 22"><g class="s" style="stroke:#333;stroke-width:1.4"><circle cx="10.500" cy="11.000" r="8.800"/><ellipse cx="10.500" cy="11.000" rx="4.000" ry="8.800"/><path d="M2 8 H19.000 M2.000 14.000 H19.000"/></g></svg>
<svg style="left:1478px;top:964px" width="24" height="24" viewBox="0 0 24 24"><path class="s" style="stroke:#333;stroke-width:1.4" d="M2.500 21.500 H21.000 M5.000 18.000 L8.000 11.500 L16.500 3.000 L21.000 7.500 L12.500 16.000 L5.000 18.000 Z M8.000 11.500 L12.500 16.000 M14.000 5.500 L18.500 10.000"/></svg>
<div class="sep" style="left:1516px;top:968px;height:16px;background:#dfe0e3"></div>
<svg style="left:1531px;top:966px" width="20" height="20" viewBox="0 0 20 20"><path class="s" style="stroke:#333;stroke-width:1.4;stroke-linecap:butt" d="M1.500 6 V1.500 H6.000 M14.000 1.500 H18.500 V6.000 M18.500 14.000 V18.500 H14.000 M6.000 18.500 H1.500 V14.000 M5.500 5.500 H14.500 V14.500 H5.500 Z"/></svg>
<div class="t st" style="left:1560px;top:965px;color:#555">102%</div><div class="dd" style="left:1605px;top:975px;border-left-width:2.5px;border-right-width:2.5px;border-top-width:3.5px"></div>
<div class="a" style="left:1626px;top:974px;width:12px;height:2px;background:#333"></div>
<!-- IME bar -->
<div class="a" style="left:1672px;top:962px;width:210px;height:30px;background:#fff;border:1px solid #d4d6da;border-radius:3px"></div>
<div class="a" style="left:1649px;top:961px;width:32px;height:30px;background:#f0541e;border-radius:5px;transform:rotate(-11deg) skewX(-5deg)"></div>
<div class="t" style="left:1652px;top:957px;font-size:34px;line-height:36px;height:36px;font-weight:700;color:#fff;font-family:'Liberation Sans',sans-serif;transform:rotate(-8deg) scaleX(1.2);transform-origin:0 50%">S</div>
<div class="t" style="left:1689px;top:965px;font-size:19px;line-height:24px;height:24px;font-weight:900;color:#2475d6">中</div>
<svg style="left:1718px;top:968px" width="160" height="22" viewBox="0 0 160 22"><g fill="none" stroke="#2475d6" stroke-width="2" stroke-linecap="round" stroke-linejoin="round">
<circle cx="4" cy="6" r="2.200" stroke-width="1.600"/><path d="M11.500 12.500 C12.500 14.000 12.000 16.500 10.000 17.500" stroke-width="2.600"/>
<circle cx="34.500" cy="11.000" r="8.500"/><path d="M31.500 7.500 V9.500 M37.500 7.500 V9.500 M29.500 13.000 C31.000 16.500 38.000 16.500 39.500 13.000"/>
<path d="M57.500 11 C57.500 17.500 66.500 17.500 66.500 11.000 M62.000 16.500 V20.000 M58.500 20.500 H65.500"/>
<rect x="59.500" y="1.500" width="5.000" height="12.000" rx="2.500" fill="#2475d6"/>
<rect x="79.500" y="4.500" width="20.000" height="13.500" rx="2.000" fill="#2475d6" stroke-width="1.500"/>
</g>
<g fill="#fff"><rect x="82" y="7" width="2" height="2"/><rect x="85.500" y="7.000" width="2.000" height="2.000"/><rect x="89.000" y="7.000" width="2.000" height="2.000"/><rect x="92.500" y="7.000" width="2.000" height="2.000"/><rect x="96.000" y="7.000" width="1.500" height="2.000"/><rect x="82.000" y="10.500" width="2.000" height="2.000"/><rect x="85.500" y="10.500" width="2.000" height="2.000"/><rect x="89.000" y="10.500" width="2.000" height="2.000"/><rect x="92.500" y="10.500" width="2.000" height="2.000"/><rect x="96.000" y="10.500" width="1.500" height="2.000"/><rect x="84.000" y="14.000" width="11.000" height="1.800"/></g>
<g fill="#b9bcc2"><circle cx="117" cy="6.500" r="4.000"/><path d="M109 19 C109.000 13.000 112.000 11.500 117.000 11.500 C119.000 11.500 120.500 12.000 121.500 12.500 V19.000 Z"/><rect x="119" y="12.500" width="9.500" height="7.000" fill="#d5d7db"/></g>
<path d="M141 2.500 L136.000 5.000 L134.000 9.500 L137.500 11.000 L138.500 9.500 V19.500 H150.500 V9.500 L151.500 11.000 L155.000 9.500 L153.000 5.000 L148.000 2.500 C147.000 4.500 142.000 4.500 141.000 2.500 Z" fill="#2475d6"/>
</svg>
<div class="a" style="left:1877px;top:968px;width:3px;height:16px;background:#c8cace"></div>


<!-- ===== taskbar ===== -->
<div class="a" id="taskbar" style="left:0;top:993px;width:1880px;height:15px;background:linear-gradient(#c4e3ea,#cfe6ec)"></div>
<div class="a" style="left:1253px;top:997px;width:48px;height:11px;background:#d9ecf0;border-radius:3px 3px 0 0"></div>
<div class="a" style="left:0;top:1000px;width:16px;height:8px;background:#d9ecf0;border-radius:0 3px 0 0"></div>
<div class="a" style="left:1844px;top:1005px;width:36px;height:3px;overflow:hidden"><div class="a" style="left:0;top:-3px;font-size:15px;line-height:15px;color:#111;font-family:'Liberation Sans',sans-serif;white-space:nowrap">00:05</div></div>
</body>
</html>
